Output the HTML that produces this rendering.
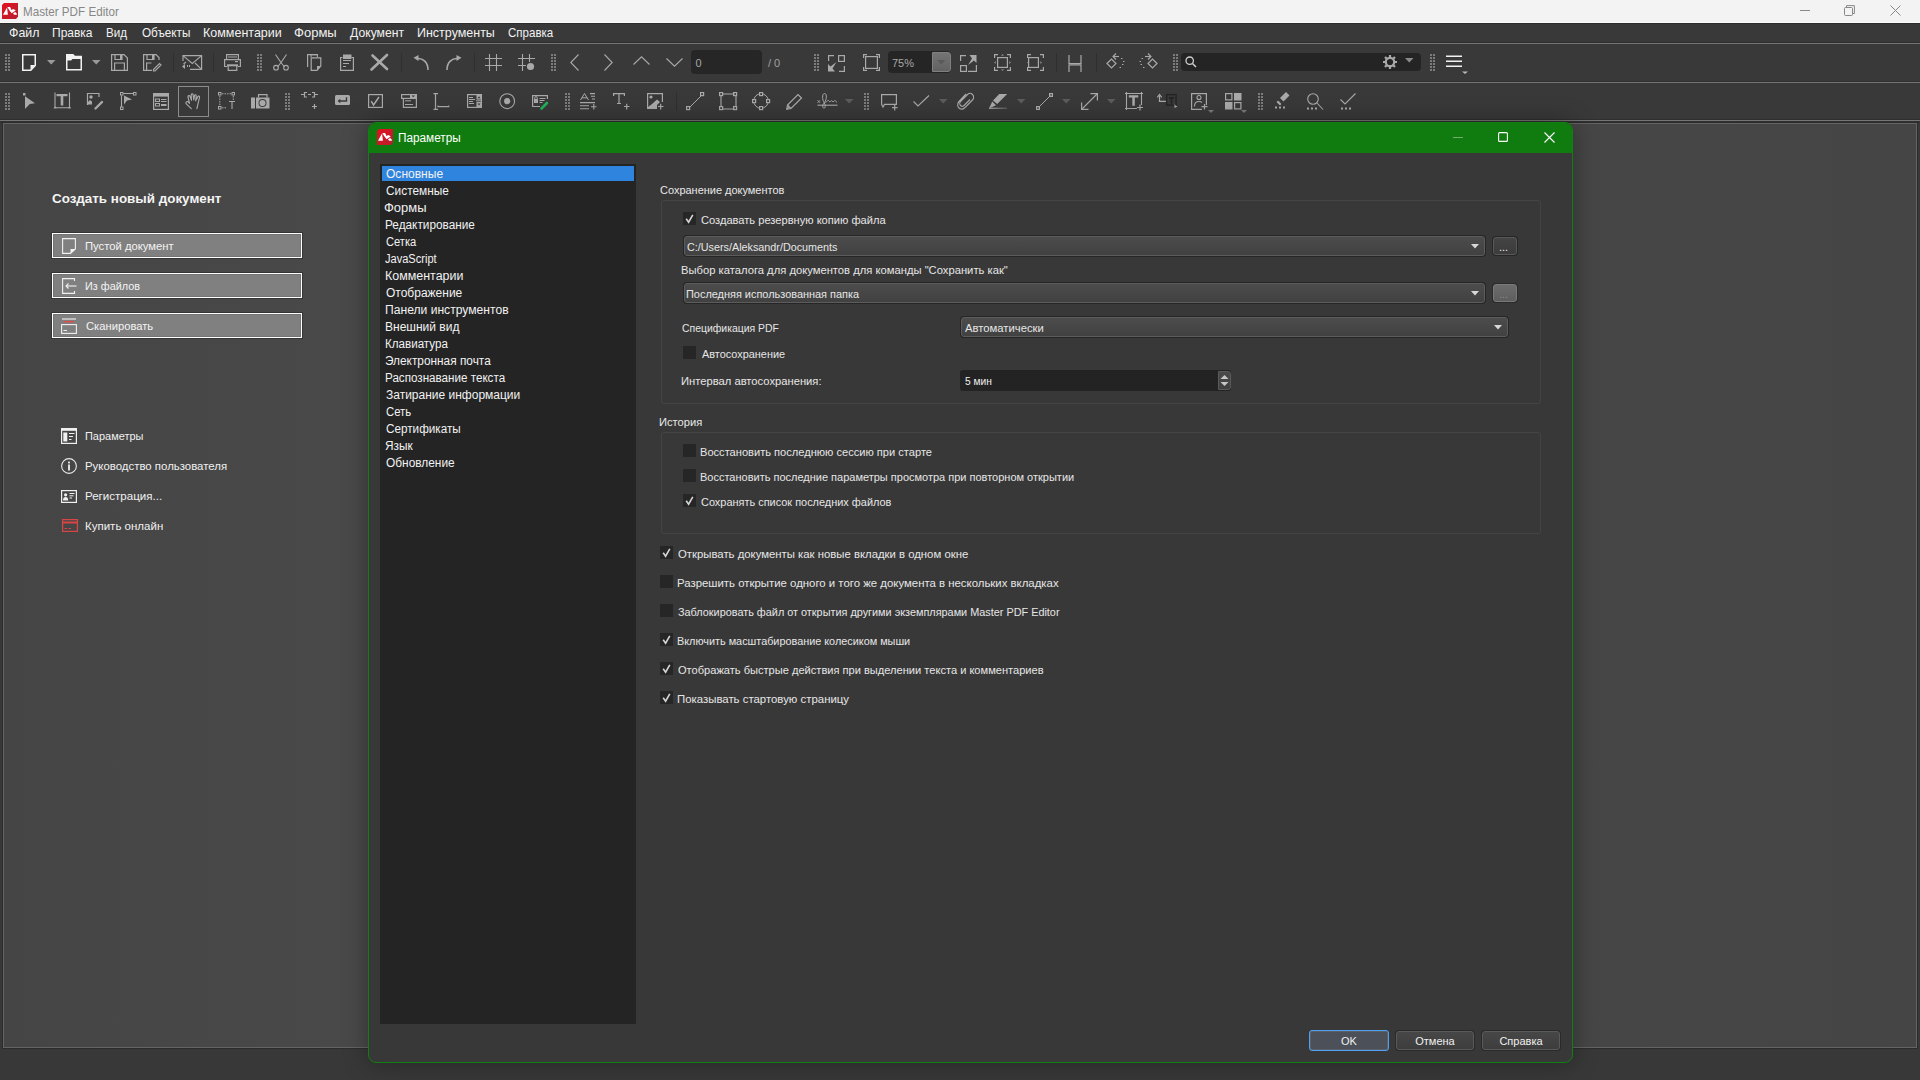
<!DOCTYPE html><html><head><meta charset="utf-8"><style>
*{margin:0;padding:0;box-sizing:border-box}
html,body{width:1920px;height:1080px;overflow:hidden;background:#383838;font-family:"Liberation Sans",sans-serif}
.t{position:absolute;line-height:1;white-space:pre}
.r{position:absolute}
svg{position:absolute;overflow:visible}
</style></head><body>

<div class="r" style="left:0px;top:0px;width:1920px;height:23px;background:#f3f3f3"></div>
<div class="r" style="left:0px;top:22px;width:1920px;height:1px;background:#fbfbfb"></div>
<div class="t" style="left:22.64px;top:6.47px;font-size:12.2px;color:#878787;font-weight:400;transform:scaleX(0.9561);transform-origin:0 0;">Master PDF Editor</div>
<svg style="left:2px;top:3px" width="16" height="16" viewBox="0 0 16 16" ><defs><linearGradient id="lg2" x1="0" y1="0" x2="1" y2="1"><stop offset="0" stop-color="#e4101f"/><stop offset="1" stop-color="#b52030"/></linearGradient></defs><path d="M2 0H16V13.8L14 16H0V2Z" fill="url(#lg2)"/><path d="M1 11.8L4.4 5.4L5.1 4.8L5.9 11.8Z M5.3 4H8.1L9.3 6.6L10 9.6L9.6 10.2L7.3 7.2Z M9.1 7.6L11 6.1L12.8 6.7L13.8 7.6L9.9 9.9L9.3 9.5Z M11 10.2L13.2 8.9L14.7 10.6L15 11.8L12.1 11.8Z" fill="#fff"/></svg>
<div class="r" style="left:1800px;top:10px;width:10px;height:1px;background:#8a8a8a"></div>
<svg style="left:1844px;top:5px" width="11" height="11" viewBox="0 0 11 11" ><path d="M2.5 2V0.6H10.4V8.5H9" fill="none" stroke="#888" stroke-width="1"/><rect x="0.5" y="2.5" width="8" height="8" rx="1" fill="none" stroke="#888" stroke-width="1"/></svg>
<svg style="left:1890px;top:5px" width="11" height="11" viewBox="0 0 11 11" ><path d="M0.5 0.5L10.5 10.5M10.5 0.5L0.5 10.5" stroke="#888" stroke-width="1"/></svg>
<div class="r" style="left:0px;top:23px;width:1920px;height:1px;background:#2c2c2c"></div>
<div class="r" style="left:0px;top:24px;width:1920px;height:18px;background:#393939"></div>
<div class="r" style="left:0px;top:42px;width:1920px;height:1px;background:#2f2f2f"></div>
<div class="r" style="left:0px;top:43px;width:1920px;height:1px;background:#747474"></div>
<div class="t" style="left:9.19px;top:26.87px;font-size:12.2px;color:#f2f2f2;font-weight:400;transform:scaleX(1.0143);transform-origin:0 0;">Файл</div>
<div class="t" style="left:52.22px;top:26.87px;font-size:12.2px;color:#f2f2f2;font-weight:400;transform:scaleX(0.9850);transform-origin:0 0;">Правка</div>
<div class="t" style="left:106.05px;top:26.87px;font-size:12.2px;color:#f2f2f2;font-weight:400;transform:scaleX(0.9524);transform-origin:0 0;">Вид</div>
<div class="t" style="left:141.50px;top:26.87px;font-size:12.2px;color:#f2f2f2;font-weight:400;transform:scaleX(0.9620);transform-origin:0 0;">Объекты</div>
<div class="t" style="left:202.97px;top:26.87px;font-size:12.2px;color:#f2f2f2;font-weight:400;transform:scaleX(1.0267);transform-origin:0 0;">Комментарии</div>
<div class="t" style="left:294.23px;top:26.87px;font-size:12.2px;color:#f2f2f2;font-weight:400;transform:scaleX(1.0684);transform-origin:0 0;">Формы</div>
<div class="t" style="left:350.00px;top:26.87px;font-size:12.2px;color:#f2f2f2;font-weight:400;transform:scaleX(1.0000);transform-origin:0 0;">Документ</div>
<div class="t" style="left:416.78px;top:26.87px;font-size:12.2px;color:#f2f2f2;font-weight:400;transform:scaleX(1.0243);transform-origin:0 0;">Инструменты</div>
<div class="t" style="left:508.00px;top:26.87px;font-size:12.2px;color:#f2f2f2;font-weight:400;transform:scaleX(0.9458);transform-origin:0 0;">Справка</div>
<div class="r" style="left:0px;top:44px;width:1920px;height:37px;background:#393939"></div>
<div class="r" style="left:0px;top:81px;width:1920px;height:1px;background:#2f2f2f"></div>
<div class="r" style="left:0px;top:82px;width:1920px;height:1px;background:#747474"></div>
<div class="r" style="left:0px;top:83px;width:1920px;height:36px;background:#393939"></div>
<div class="r" style="left:0px;top:119px;width:1920px;height:1px;background:#2f2f2f"></div>
<div class="r" style="left:0px;top:120px;width:1920px;height:1px;background:#747474"></div>
<div class="r" style="left:0px;top:121px;width:1920px;height:2px;background:#303030"></div>
<div class="r" style="left:2px;top:122px;width:1916px;height:927px;background:#2c2c2c"></div>
<div class="r" style="left:3px;top:123px;width:1914px;height:925px;background:#646464"></div>
<div class="r" style="left:4px;top:124px;width:1912px;height:923px;background:linear-gradient(90deg,#454545 0px,#494949 360px,#464646 1570px,#454545 1912px)"></div>
<svg style="left:5px;top:54px" width="5" height="17" viewBox="0 0 5 17" ><rect x="0" y="0" width="2" height="2" fill="#7c7c7c"/><rect x="3" y="0" width="2" height="2" fill="#7c7c7c"/><rect x="0" y="3" width="2" height="2" fill="#7c7c7c"/><rect x="3" y="3" width="2" height="2" fill="#7c7c7c"/><rect x="0" y="6" width="2" height="2" fill="#7c7c7c"/><rect x="3" y="6" width="2" height="2" fill="#7c7c7c"/><rect x="0" y="9" width="2" height="2" fill="#7c7c7c"/><rect x="3" y="9" width="2" height="2" fill="#7c7c7c"/><rect x="0" y="12" width="2" height="2" fill="#7c7c7c"/><rect x="3" y="12" width="2" height="2" fill="#7c7c7c"/><rect x="0" y="15" width="2" height="2" fill="#7c7c7c"/><rect x="3" y="15" width="2" height="2" fill="#7c7c7c"/></svg>
<svg style="left:22px;top:54px" width="15" height="17" viewBox="0 0 15 17" ><path d="M0.75 0.75H13.25V11.5L8.75 16.25H0.75Z" fill="none" stroke="#f2f2f2" stroke-width="1.5"/><path d="M8.5 11H13.25L8.5 16Z" fill="#f2f2f2"/></svg>
<svg style="left:47px;top:60px" width="9" height="5" viewBox="0 0 9 5" ><path d="M0 0H8.5L4.25 4.5Z" fill="#9a9a9a"/></svg>
<svg style="left:66px;top:54px" width="17" height="17" viewBox="0 0 17 17" ><path d="M0.75 15.75V0.75H7L8.5 2.5H15.25V15.75Z" fill="none" stroke="#f2f2f2" stroke-width="1.5"/><path d="M0.75 0.75H7L8.5 2.5H15.25V5H6.5L5 6.5H0.75Z" fill="#f2f2f2"/></svg>
<svg style="left:92px;top:60px" width="9" height="5" viewBox="0 0 9 5" ><path d="M0 0H8.5L4.25 4.5Z" fill="#9a9a9a"/></svg>
<svg style="left:111px;top:54px" width="17" height="17" viewBox="0 0 17 17" ><path d="M0.6 0.6H13L16.4 4V16.4H0.6Z" fill="none" stroke="#a9a9a9" stroke-width="1.2"/><path d="M4 0.6V5.5H11V0.6" fill="none" stroke="#a9a9a9" stroke-width="1.2"/><rect x="9" y="1" width="2" height="4" fill="#a9a9a9"/><path d="M3.6 16.4V9H13.4V16.4" fill="none" stroke="#a9a9a9" stroke-width="1.2"/></svg>
<svg style="left:143px;top:54px" width="19" height="17" viewBox="0 0 19 17" ><path d="M9 16.4H0.6V0.6H13L16 3.6V6" fill="none" stroke="#a9a9a9" stroke-width="1.2"/><path d="M4 0.6V5.5H11V0.6" fill="none" stroke="#a9a9a9" stroke-width="1.2"/><rect x="9" y="1" width="2" height="4" fill="#a9a9a9"/><path d="M3.6 16.4V9H8.5" fill="none" stroke="#a9a9a9" stroke-width="1.2"/><path d="M10.5 15.5L16.5 9.5L18 11L12 17H10.5Z" fill="none" stroke="#a9a9a9" stroke-width="1.2"/></svg>
<div class="r" style="left:173px;top:53px;width:1px;height:19px;background:#2f2f2f"></div>
<svg style="left:182px;top:55px" width="21" height="15" viewBox="0 0 21 15" ><path d="M1 6V0.6H19.6V14.4H8" fill="none" stroke="#a9a9a9" stroke-width="1.2"/><path d="M1 0.6L10.3 8.5L19.6 0.6M19.6 14.4L13 8M1.5 9L4 7" fill="none" stroke="#a9a9a9" stroke-width="1.1"/><path d="M0 11.5L3 9V14Z" fill="#a9a9a9"/><rect x="5" y="10" width="1" height="2" fill="#a9a9a9"/><rect x="7" y="10" width="1" height="2" fill="#a9a9a9"/></svg>
<div class="r" style="left:213px;top:53px;width:1px;height:19px;background:#2f2f2f"></div>
<svg style="left:224px;top:54px" width="17" height="17" viewBox="0 0 17 17" ><path d="M2.6 5V0.6H14.4V5" fill="none" stroke="#a9a9a9" stroke-width="1.2"/><rect x="4" y="2.5" width="9" height="1" fill="#a9a9a9"/><path d="M3 12.5H0.6V5.6H16.4V12.5H14" fill="none" stroke="#a9a9a9" stroke-width="1.2"/><rect x="11" y="7" width="3" height="1.2" fill="#a9a9a9"/><path d="M4.2 11.5V16.4H12.8V11.5" fill="none" stroke="#a9a9a9" stroke-width="1.2"/><rect x="3" y="10.3" width="11" height="2" fill="#a9a9a9"/></svg>
<svg style="left:257px;top:54px" width="5" height="17" viewBox="0 0 5 17" ><rect x="0" y="0" width="2" height="2" fill="#7c7c7c"/><rect x="3" y="0" width="2" height="2" fill="#7c7c7c"/><rect x="0" y="3" width="2" height="2" fill="#7c7c7c"/><rect x="3" y="3" width="2" height="2" fill="#7c7c7c"/><rect x="0" y="6" width="2" height="2" fill="#7c7c7c"/><rect x="3" y="6" width="2" height="2" fill="#7c7c7c"/><rect x="0" y="9" width="2" height="2" fill="#7c7c7c"/><rect x="3" y="9" width="2" height="2" fill="#7c7c7c"/><rect x="0" y="12" width="2" height="2" fill="#7c7c7c"/><rect x="3" y="12" width="2" height="2" fill="#7c7c7c"/><rect x="0" y="15" width="2" height="2" fill="#7c7c7c"/><rect x="3" y="15" width="2" height="2" fill="#7c7c7c"/></svg>
<svg style="left:273px;top:54px" width="16" height="17" viewBox="0 0 16 17" ><path d="M2.5 0.5L8 8.5L13.5 0.5M8 8.5L4.5 13M8 8.5L11.5 13" fill="none" stroke="#a9a9a9" stroke-width="1.1"/><circle cx="3" cy="13.7" r="2.3" fill="none" stroke="#a9a9a9" stroke-width="1.1"/><circle cx="13" cy="13.7" r="2.3" fill="none" stroke="#a9a9a9" stroke-width="1.1"/></svg>
<svg style="left:307px;top:54px" width="15" height="17" viewBox="0 0 15 17" ><path d="M4 3V0.6H10.4V3" fill="none" stroke="#a9a9a9" stroke-width="1.1"/><path d="M0.6 13V0.6H11M4.2 16.4V3.8H13.8V12L10 16.4Z" fill="none" stroke="#a9a9a9" stroke-width="1.2"/><path d="M10 12H13.8L10 16.4Z" fill="#a9a9a9"/></svg>
<svg style="left:340px;top:54px" width="15" height="17" viewBox="0 0 15 17" ><path d="M2.5 3.5H0.6V16.4H13.4V3.5H11.5" fill="none" stroke="#a9a9a9" stroke-width="1.2"/><rect x="3" y="0.5" width="8.5" height="4.5" fill="#a9a9a9"/><rect x="3" y="6" width="8" height="1" fill="#a9a9a9"/><rect x="3" y="9" width="6" height="1" fill="#a9a9a9"/><rect x="3" y="12" width="3" height="1" fill="#a9a9a9"/></svg>
<svg style="left:370px;top:54px" width="20" height="17" viewBox="0 0 20 17" ><path d="M2.5 1.5L17 15" stroke="#a9a9a9" stroke-width="2.6" stroke-linecap="round"/><path d="M17 1L1.5 15.5" stroke="#a9a9a9" stroke-width="2.6" stroke-linecap="round"/></svg>
<div class="r" style="left:401px;top:53px;width:1px;height:19px;background:#2f2f2f"></div>
<svg style="left:413px;top:55px" width="16" height="16" viewBox="0 0 16 16" ><path d="M4 3.5C10 3 15 7 15 15" fill="none" stroke="#a9a9a9" stroke-width="1.6"/><path d="M0.5 2.8L5.5 0V6Z" fill="#a9a9a9"/></svg>
<svg style="left:446px;top:55px" width="16" height="16" viewBox="0 0 16 16" ><path d="M12 3.5C6 3 1 7 1 15" fill="none" stroke="#a9a9a9" stroke-width="1.6"/><path d="M15.5 2.8L10.5 0V6Z" fill="#a9a9a9"/></svg>
<div class="r" style="left:474px;top:53px;width:1px;height:19px;background:#2f2f2f"></div>
<svg style="left:485px;top:54px" width="17" height="17" viewBox="0 0 17 17" ><path d="M4.5 0V17M11.5 0V17M0 4.5H17M0 11.5H17" stroke="#a9a9a9" stroke-width="1.1"/></svg>
<svg style="left:518px;top:54px" width="17" height="17" viewBox="0 0 17 17" ><path d="M4.5 0V17M11.5 0V8M0 4.5H17M0 11.5H8" stroke="#a9a9a9" stroke-width="1.1"/><circle cx="12.5" cy="12.5" r="3.6" fill="#a9a9a9"/></svg>
<svg style="left:551px;top:54px" width="5" height="17" viewBox="0 0 5 17" ><rect x="0" y="0" width="2" height="2" fill="#7c7c7c"/><rect x="3" y="0" width="2" height="2" fill="#7c7c7c"/><rect x="0" y="3" width="2" height="2" fill="#7c7c7c"/><rect x="3" y="3" width="2" height="2" fill="#7c7c7c"/><rect x="0" y="6" width="2" height="2" fill="#7c7c7c"/><rect x="3" y="6" width="2" height="2" fill="#7c7c7c"/><rect x="0" y="9" width="2" height="2" fill="#7c7c7c"/><rect x="3" y="9" width="2" height="2" fill="#7c7c7c"/><rect x="0" y="12" width="2" height="2" fill="#7c7c7c"/><rect x="3" y="12" width="2" height="2" fill="#7c7c7c"/><rect x="0" y="15" width="2" height="2" fill="#7c7c7c"/><rect x="3" y="15" width="2" height="2" fill="#7c7c7c"/></svg>
<svg style="left:570px;top:54px" width="9" height="17" viewBox="0 0 9 17" ><path d="M8.5 0.5L0.8 8.5L8.5 16.5" fill="none" stroke="#a9a9a9" stroke-width="1.1"/></svg>
<svg style="left:604px;top:54px" width="9" height="17" viewBox="0 0 9 17" ><path d="M0.5 0.5L8.2 8.5L0.5 16.5" fill="none" stroke="#a9a9a9" stroke-width="1.1"/></svg>
<svg style="left:633px;top:56px" width="17" height="10" viewBox="0 0 17 10" ><path d="M0.5 8.5L8.5 0.8L16.5 8.5" fill="none" stroke="#a9a9a9" stroke-width="1.1"/></svg>
<svg style="left:666px;top:58px" width="17" height="10" viewBox="0 0 17 10" ><path d="M0.5 0.5L8.5 8.2L16.5 0.5" fill="none" stroke="#a9a9a9" stroke-width="1.1"/></svg>
<div class="r" style="left:691px;top:50px;width:71px;height:24px;background:#262626;border-radius:4px"></div>
<div class="t" style="left:695.5px;top:57.6px;font-size:11px;color:#a8a8a8">0</div>
<div class="t" style="left:768px;top:57.6px;font-size:11px;color:#a0a0a0">/ 0</div>
<svg style="left:814px;top:54px" width="5" height="17" viewBox="0 0 5 17" ><rect x="0" y="0" width="2" height="2" fill="#7c7c7c"/><rect x="3" y="0" width="2" height="2" fill="#7c7c7c"/><rect x="0" y="3" width="2" height="2" fill="#7c7c7c"/><rect x="3" y="3" width="2" height="2" fill="#7c7c7c"/><rect x="0" y="6" width="2" height="2" fill="#7c7c7c"/><rect x="3" y="6" width="2" height="2" fill="#7c7c7c"/><rect x="0" y="9" width="2" height="2" fill="#7c7c7c"/><rect x="3" y="9" width="2" height="2" fill="#7c7c7c"/><rect x="0" y="12" width="2" height="2" fill="#7c7c7c"/><rect x="3" y="12" width="2" height="2" fill="#7c7c7c"/><rect x="0" y="15" width="2" height="2" fill="#7c7c7c"/><rect x="3" y="15" width="2" height="2" fill="#7c7c7c"/></svg>
<svg style="left:828px;top:55px" width="18" height="17" viewBox="0 0 18 17" ><path d="M0.6 6V0.6H6M11 16.4H16.4V11" fill="none" stroke="#a9a9a9" stroke-width="1.2"/><rect x="10.6" y="0.6" width="5.8" height="5.8" fill="none" stroke="#a9a9a9" stroke-width="1.2"/><path d="M0 16.5V9L2.5 11.5L8.5 7L4.5 13.5L7 16.5Z" fill="#a9a9a9"/></svg>
<svg style="left:863px;top:54px" width="17" height="17" viewBox="0 0 17 17" ><path d="M0.6 4V0.6H4M13 0.6H16.4V4M16.4 13V16.4H13M4 16.4H0.6V13" fill="none" stroke="#a9a9a9" stroke-width="1.2"/><rect x="2.6" y="2.6" width="11.8" height="11.8" fill="none" stroke="#a9a9a9" stroke-width="1.2"/></svg>
<div class="r" style="left:888px;top:51px;width:63px;height:22px;background:#252525;border-radius:4px"></div>
<div class="r" style="left:932px;top:52px;width:19px;height:20px;background:linear-gradient(#747474,#626262);border:1px solid #808080;border-radius:0 3px 3px 0"></div>
<svg style="left:937px;top:60px" width="9" height="5" viewBox="0 0 9 5" ><path d="M0 0H8.5L4.25 4.5Z" fill="#5a5a5a"/></svg>
<div class="t" style="left:892px;top:57.6px;font-size:11px;color:#a8a8a8">75%</div>
<svg style="left:960px;top:55px" width="17" height="17" viewBox="0 0 17 17" ><path d="M0.6 6V0.6H6M8 16.4H16.4V10" fill="none" stroke="#a9a9a9" stroke-width="1.2"/><rect x="0.6" y="10.6" width="5.8" height="5.8" fill="none" stroke="#a9a9a9" stroke-width="1.2"/><path d="M16.5 0V8L14 5.5L8 10L12 3.5L9.5 0Z" fill="#a9a9a9"/></svg>
<svg style="left:994px;top:54px" width="17" height="17" viewBox="0 0 17 17" ><path d="M0.6 4V0.6H4M13 0.6H16.4V4M16.4 13V16.4H13M4 16.4H0.6V13" fill="none" stroke="#a9a9a9" stroke-width="1.2"/><rect x="3.6" y="3.6" width="9.8" height="9.8" fill="none" stroke="#a9a9a9" stroke-width="1.2"/><path d="M7 1.5H10L8.5 0.3Z M7 15.5H10L8.5 16.7Z M1.5 7V10L0.3 8.5Z M15.5 7V10L16.7 8.5Z" fill="#a9a9a9"/></svg>
<svg style="left:1027px;top:54px" width="17" height="17" viewBox="0 0 17 17" ><path d="M0.6 4V0.6H4M13 0.6H16.4V4M16.4 13V16.4H13M4 16.4H0.6V13" fill="none" stroke="#a9a9a9" stroke-width="1.2"/><rect x="1.6" y="3.6" width="9.8" height="9.8" fill="none" stroke="#a9a9a9" stroke-width="1.2"/><path d="M1.5 7V10L0.3 8.5Z M13.5 7V10L14.7 8.5Z" fill="#a9a9a9"/></svg>
<div class="r" style="left:1056px;top:53px;width:1px;height:19px;background:#2f2f2f"></div>
<svg style="left:1068px;top:55px" width="14" height="17" viewBox="0 0 14 17" ><path d="M1 0V8.5H13V0M1 17V9.8H13V17" fill="none" stroke="#a9a9a9" stroke-width="1.2"/></svg>
<div class="r" style="left:1096px;top:53px;width:1px;height:19px;background:#2f2f2f"></div>
<svg style="left:1106px;top:53px" width="20" height="17" viewBox="0 0 20 17" ><path d="M1 10.5L5.5 6L10 10.5L5.5 15Z" fill="none" stroke="#a9a9a9" stroke-width="1.2"/><path d="M7.5 3.5H13" stroke="#a9a9a9" stroke-width="1.1"/><path d="M10 0.5L7 3.5L10 6.5" fill="none" stroke="#a9a9a9" stroke-width="1.1"/><path d="M15 5.5h1.5M17 8.5h1.5M16 11.5h1.5M13.5 14.5h1.5" stroke="#a9a9a9" stroke-width="1"/></svg>
<svg style="left:1138px;top:53px" width="20" height="17" viewBox="0 0 20 17" ><path d="M19 10.5L14.5 6L10 10.5L14.5 15Z" fill="none" stroke="#a9a9a9" stroke-width="1.2"/><path d="M7 3.5H12.5" stroke="#a9a9a9" stroke-width="1.1"/><path d="M10 0.5L13 3.5L10 6.5" fill="none" stroke="#a9a9a9" stroke-width="1.1"/><path d="M3.5 5.5h1.5M1.5 8.5h1.5M2.5 11.5h1.5M5 14.5h1.5" stroke="#a9a9a9" stroke-width="1"/></svg>
<svg style="left:1173px;top:54px" width="5" height="17" viewBox="0 0 5 17" ><rect x="0" y="0" width="2" height="2" fill="#7c7c7c"/><rect x="3" y="0" width="2" height="2" fill="#7c7c7c"/><rect x="0" y="3" width="2" height="2" fill="#7c7c7c"/><rect x="3" y="3" width="2" height="2" fill="#7c7c7c"/><rect x="0" y="6" width="2" height="2" fill="#7c7c7c"/><rect x="3" y="6" width="2" height="2" fill="#7c7c7c"/><rect x="0" y="9" width="2" height="2" fill="#7c7c7c"/><rect x="3" y="9" width="2" height="2" fill="#7c7c7c"/><rect x="0" y="12" width="2" height="2" fill="#7c7c7c"/><rect x="3" y="12" width="2" height="2" fill="#7c7c7c"/><rect x="0" y="15" width="2" height="2" fill="#7c7c7c"/><rect x="3" y="15" width="2" height="2" fill="#7c7c7c"/></svg>
<div class="r" style="left:1181px;top:53px;width:240px;height:18px;background:#242424;border-radius:4px"></div>
<svg style="left:1185px;top:56px" width="12" height="12" viewBox="0 0 12 12" ><circle cx="4.7" cy="4.7" r="3.7" fill="none" stroke="#cfcfcf" stroke-width="1.3"/><path d="M7.5 7.5L11 11" stroke="#cfcfcf" stroke-width="1.5"/></svg>
<svg style="left:1383px;top:55px" width="14" height="14" viewBox="0 0 14 14" ><circle cx="7" cy="7" r="4.2" fill="none" stroke="#a9a9a9" stroke-width="2.2"/><path d="M7 0V14M0 7H14M2 2L12 12M12 2L2 12" stroke="#a9a9a9" stroke-width="2.2" stroke-dasharray="2.6 8.8 2.6 0"/></svg>
<svg style="left:1405px;top:58px" width="9" height="5" viewBox="0 0 9 5" ><path d="M0 0H8.5L4.25 4.5Z" fill="#8a8a8a"/></svg>
<svg style="left:1430px;top:54px" width="5" height="17" viewBox="0 0 5 17" ><rect x="0" y="0" width="2" height="2" fill="#7c7c7c"/><rect x="3" y="0" width="2" height="2" fill="#7c7c7c"/><rect x="0" y="3" width="2" height="2" fill="#7c7c7c"/><rect x="3" y="3" width="2" height="2" fill="#7c7c7c"/><rect x="0" y="6" width="2" height="2" fill="#7c7c7c"/><rect x="3" y="6" width="2" height="2" fill="#7c7c7c"/><rect x="0" y="9" width="2" height="2" fill="#7c7c7c"/><rect x="3" y="9" width="2" height="2" fill="#7c7c7c"/><rect x="0" y="12" width="2" height="2" fill="#7c7c7c"/><rect x="3" y="12" width="2" height="2" fill="#7c7c7c"/><rect x="0" y="15" width="2" height="2" fill="#7c7c7c"/><rect x="3" y="15" width="2" height="2" fill="#7c7c7c"/></svg>
<svg style="left:1446px;top:55px" width="22" height="20" viewBox="0 0 22 20" ><path d="M0 1.3H16M0 6.3H16M0 11.3H16" stroke="#f2f2f2" stroke-width="1.6"/><path d="M16 16.5H22L19 19Z" fill="#bbbbbb"/></svg>
<svg style="left:5px;top:93px" width="5" height="17" viewBox="0 0 5 17" ><rect x="0" y="0" width="2" height="2" fill="#7c7c7c"/><rect x="3" y="0" width="2" height="2" fill="#7c7c7c"/><rect x="0" y="3" width="2" height="2" fill="#7c7c7c"/><rect x="3" y="3" width="2" height="2" fill="#7c7c7c"/><rect x="0" y="6" width="2" height="2" fill="#7c7c7c"/><rect x="3" y="6" width="2" height="2" fill="#7c7c7c"/><rect x="0" y="9" width="2" height="2" fill="#7c7c7c"/><rect x="3" y="9" width="2" height="2" fill="#7c7c7c"/><rect x="0" y="12" width="2" height="2" fill="#7c7c7c"/><rect x="3" y="12" width="2" height="2" fill="#7c7c7c"/><rect x="0" y="15" width="2" height="2" fill="#7c7c7c"/><rect x="3" y="15" width="2" height="2" fill="#7c7c7c"/></svg>
<svg style="left:23px;top:92px" width="13" height="18" viewBox="0 0 13 18" ><rect x="0" y="1" width="2.5" height="2.5" fill="#a9a9a9"/><path d="M2 4.2L12 11.3L6.8 12L2 17Z" fill="#a9a9a9"/></svg>
<svg style="left:54px;top:92px" width="17" height="18" viewBox="0 0 17 18" ><path d="M1 0.5V16.5M15.5 0.5V16.5M0 15.8H16.5" stroke="#a9a9a9" stroke-width="1.1"/><path d="M2.5 2H13.5V4.2H9.3V13.5H6.7V4.2H2.5Z" fill="#a9a9a9"/><path d="M0 16.3L1 14.8L2 16.3M14.5 16.3L15.5 14.8L16.5 16.3" fill="none" stroke="#a9a9a9" stroke-width="1"/></svg>
<svg style="left:87px;top:93px" width="17" height="17" viewBox="0 0 17 17" ><path d="M0.5 12V0.5H12V4" fill="none" stroke="#a9a9a9" stroke-width="1.2"/><circle cx="4" cy="4" r="1.7" fill="#a9a9a9"/><path d="M1 11.5V9L3 7L5 8.5V11.5Z" fill="#a9a9a9"/><path d="M8.5 15.5L15 9" stroke="#a9a9a9" stroke-width="2.4" stroke-linecap="round"/></svg>
<svg style="left:120px;top:92px" width="17" height="18" viewBox="0 0 17 18" ><path d="M1.5 3.5V15M3.5 1.5H14" stroke="#a9a9a9" stroke-width="1.1"/><rect x="0.5" y="0.5" width="2.5" height="2.5" fill="none" stroke="#a9a9a9" stroke-width="1"/><rect x="13.5" y="0.5" width="2.5" height="2.5" fill="none" stroke="#a9a9a9" stroke-width="1"/><rect x="0.5" y="15" width="2.5" height="2.5" fill="none" stroke="#a9a9a9" stroke-width="1"/><path d="M4 3.5L12 7.5L7 8.5L4 12.5Z" fill="#a9a9a9"/></svg>
<svg style="left:153px;top:93px" width="16" height="17" viewBox="0 0 16 17" ><rect x="0.6" y="0.6" width="14.8" height="15.8" fill="none" stroke="#a9a9a9" stroke-width="1.2"/><rect x="0.6" y="0.6" width="14.8" height="3" fill="#a9a9a9"/><rect x="2.5" y="6" width="4" height="2.5" fill="none" stroke="#a9a9a9" stroke-width="1"/><rect x="2.5" y="10.5" width="4" height="2.5" fill="none" stroke="#a9a9a9" stroke-width="1"/><rect x="8" y="6" width="5.5" height="1" fill="#a9a9a9"/><rect x="8" y="8" width="5.5" height="1" fill="#a9a9a9"/><rect x="8" y="11" width="5.5" height="2" fill="#a9a9a9"/></svg>
<div class="r" style="left:178px;top:86px;width:31px;height:31px;border:1px solid #8c8c8c"></div>
<svg style="left:185px;top:93px" width="18" height="17" viewBox="0 0 18 17" ><path d="M6.3 15.7L1.3 10.8C0.3 9.8 1.5 8 2.8 8.7L4.5 10.3L3 4C2.7 2.5 4.4 2 5 3.3L6.5 7.3L6.2 2C6.2 0.6 7.8 0.5 8.1 1.7L8.8 7L9.5 2.6C9.7 1.3 11.3 1.5 11.2 2.9L10.7 7.8L12.8 3.6C13.4 2.5 14.8 3.1 14.5 4.3L11.9 15.7" fill="none" stroke="#a9a9a9" stroke-width="1.15" stroke-linecap="round" stroke-linejoin="round"/></svg>
<svg style="left:218px;top:92px" width="18" height="18" viewBox="0 0 18 18" ><rect x="0.5" y="0.5" width="2.5" height="2.5" fill="none" stroke="#a9a9a9" stroke-width="1"/><rect x="14" y="0.5" width="2.5" height="2.5" fill="none" stroke="#a9a9a9" stroke-width="1"/><rect x="0.5" y="14.5" width="2.5" height="2.5" fill="none" stroke="#a9a9a9" stroke-width="1"/><path d="M4 1.8H13M1.8 4V13.5M15.3 4V9M4 15.8H9" stroke="#a9a9a9" stroke-width="1" stroke-dasharray="1.5 1"/><path d="M11 9.5H17M14 9.5V17" stroke="#a9a9a9" stroke-width="1.1"/></svg>
<svg style="left:251px;top:94px" width="19" height="15" viewBox="0 0 19 15" ><path d="M7.5 3.5V0.6H16V3.5" fill="none" stroke="#a9a9a9" stroke-width="1.2"/><rect x="0" y="3.5" width="4" height="11" fill="#a9a9a9"/><path d="M5 3.5H18.5V14.5H5Z" fill="#a9a9a9"/><circle cx="11.5" cy="9" r="4" fill="#383838"/><circle cx="11.5" cy="9" r="3.1" fill="#a9a9a9"/></svg>
<svg style="left:285px;top:93px" width="5" height="17" viewBox="0 0 5 17" ><rect x="0" y="0" width="2" height="2" fill="#7c7c7c"/><rect x="3" y="0" width="2" height="2" fill="#7c7c7c"/><rect x="0" y="3" width="2" height="2" fill="#7c7c7c"/><rect x="3" y="3" width="2" height="2" fill="#7c7c7c"/><rect x="0" y="6" width="2" height="2" fill="#7c7c7c"/><rect x="3" y="6" width="2" height="2" fill="#7c7c7c"/><rect x="0" y="9" width="2" height="2" fill="#7c7c7c"/><rect x="3" y="9" width="2" height="2" fill="#7c7c7c"/><rect x="0" y="12" width="2" height="2" fill="#7c7c7c"/><rect x="3" y="12" width="2" height="2" fill="#7c7c7c"/><rect x="0" y="15" width="2" height="2" fill="#7c7c7c"/><rect x="3" y="15" width="2" height="2" fill="#7c7c7c"/></svg>
<svg style="left:301px;top:92px" width="17" height="18" viewBox="0 0 17 18" ><path d="M0 2.5H3M14 2.5H17M7 2.5H10" stroke="#a9a9a9" stroke-width="1.1"/><path d="M6 0.5H3.5V5H6M11 0.5H13.5V5H11" fill="none" stroke="#a9a9a9" stroke-width="1.2"/><path d="M11 14.5H16M13.5 12V17" stroke="#a9a9a9" stroke-width="1.2"/></svg>
<svg style="left:335px;top:95px" width="15" height="10" viewBox="0 0 15 10" ><rect x="0" y="0" width="15" height="10" rx="1.5" fill="#a9a9a9"/><path d="M11.5 2.3V6H4" fill="none" stroke="#383838" stroke-width="1.4"/><path d="M2.5 6L5.3 3.8V8.2Z" fill="#383838"/></svg>
<svg style="left:368px;top:94px" width="15" height="14" viewBox="0 0 15 14" ><rect x="0.6" y="0.6" width="13.8" height="12.8" fill="none" stroke="#a9a9a9" stroke-width="1.2"/><path d="M3.2 7.2L5.5 11L11 3" fill="none" stroke="#a9a9a9" stroke-width="1.5"/></svg>
<svg style="left:401px;top:94px" width="16" height="14" viewBox="0 0 16 14" ><rect x="0.6" y="0.6" width="14.8" height="3.8" fill="none" stroke="#a9a9a9" stroke-width="1.2"/><rect x="9" y="0.6" width="6.4" height="3.8" fill="#a9a9a9"/><path d="M10.5 1.5H14L12.25 3.3Z" fill="#383838"/><path d="M2.4 4.4V13.4H15.4V4.4" fill="none" stroke="#a9a9a9" stroke-width="1.2"/><rect x="4" y="6.3" width="6" height="1" fill="#a9a9a9"/><rect x="4" y="10" width="8" height="1" fill="#a9a9a9"/></svg>
<svg style="left:433px;top:93px" width="17" height="17" viewBox="0 0 17 17" ><path d="M2.5 0.5V16.5M0.5 0.6H5M0.5 16.4H5" stroke="#a9a9a9" stroke-width="1.2"/><path d="M5 12.5V13.7H15.7V12.5" fill="none" stroke="#a9a9a9" stroke-width="1.2"/></svg>
<svg style="left:467px;top:94px" width="15" height="14" viewBox="0 0 15 14" ><rect x="0.6" y="0.6" width="13.8" height="12.8" fill="none" stroke="#a9a9a9" stroke-width="1.2"/><rect x="9.5" y="0.6" width="4.9" height="5" fill="#a9a9a9"/><rect x="9.5" y="8" width="4.9" height="5.4" fill="#a9a9a9"/><path d="M10.5 4.3H13.5L12 2.3Z M10.5 9.5H13.5L12 11.5Z" fill="#383838"/><rect x="2" y="3" width="4" height="1" fill="#a9a9a9"/><rect x="2" y="5" width="6" height="1" fill="#a9a9a9"/><rect x="2" y="7" width="4" height="1" fill="#a9a9a9"/><rect x="2" y="9" width="5" height="1" fill="#a9a9a9"/><rect x="9" y="6.3" width="5.5" height="1" fill="#a9a9a9"/></svg>
<svg style="left:499px;top:93px" width="17" height="17" viewBox="0 0 17 17" ><circle cx="8.2" cy="8.2" r="7.4" fill="none" stroke="#a9a9a9" stroke-width="1.1"/><circle cx="8.2" cy="8.2" r="3.1" fill="#a9a9a9"/></svg>
<svg style="left:532px;top:95px" width="17" height="15" viewBox="0 0 17 15" ><path d="M8 11.5H0.6V0.6H15.4V4" fill="none" stroke="#a9a9a9" stroke-width="1.2"/><rect x="2" y="4" width="4" height="4" fill="#a9a9a9"/><path d="M2.8 4V2.8A1.2 1.2 0 0 1 5.2 2.8V4" fill="none" stroke="#a9a9a9" stroke-width="1"/><rect x="7.5" y="3" width="6" height="1" fill="#a9a9a9"/><rect x="7.5" y="5" width="5" height="1" fill="#a9a9a9"/><rect x="7.5" y="7" width="3" height="1" fill="#a9a9a9"/><path d="M9.5 13.5L15 8" stroke="#21b25a" stroke-width="2.6" stroke-linecap="round"/></svg>
<svg style="left:565px;top:93px" width="5" height="17" viewBox="0 0 5 17" ><rect x="0" y="0" width="2" height="2" fill="#7c7c7c"/><rect x="3" y="0" width="2" height="2" fill="#7c7c7c"/><rect x="0" y="3" width="2" height="2" fill="#7c7c7c"/><rect x="3" y="3" width="2" height="2" fill="#7c7c7c"/><rect x="0" y="6" width="2" height="2" fill="#7c7c7c"/><rect x="3" y="6" width="2" height="2" fill="#7c7c7c"/><rect x="0" y="9" width="2" height="2" fill="#7c7c7c"/><rect x="3" y="9" width="2" height="2" fill="#7c7c7c"/><rect x="0" y="12" width="2" height="2" fill="#7c7c7c"/><rect x="3" y="12" width="2" height="2" fill="#7c7c7c"/><rect x="0" y="15" width="2" height="2" fill="#7c7c7c"/><rect x="3" y="15" width="2" height="2" fill="#7c7c7c"/></svg>
<svg style="left:580px;top:93px" width="17" height="17" viewBox="0 0 17 17" ><path d="M0.5 7L4.5 0.5L8.5 7M2 4.8H7" fill="none" stroke="#a9a9a9" stroke-width="1"/><path d="M10 0.6H15M11 3.3H15M12 6H15M0 9.6H15M0 12.8H9M0 15.8H9" stroke="#a9a9a9" stroke-width="1.1"/><path d="M11 13.7H16.5M13.8 11V16.5" stroke="#a9a9a9" stroke-width="1.1"/></svg>
<svg style="left:613px;top:93px" width="17" height="17" viewBox="0 0 17 17" ><path d="M0.6 3V0.6H11.4V3M6 0.6V10.5M4 10.5H8" fill="none" stroke="#a9a9a9" stroke-width="1.2"/><path d="M11 13.5H16.5M13.7 10.8V16.5" stroke="#a9a9a9" stroke-width="1.2"/></svg>
<svg style="left:647px;top:93px" width="17" height="17" viewBox="0 0 17 17" ><path d="M0.6 16V0.6H15.4V9" fill="none" stroke="#a9a9a9" stroke-width="1.2"/><circle cx="4" cy="4" r="1.6" fill="#a9a9a9"/><path d="M1 16V14L5 11L10 6.5L13 9L10 12V16Z" fill="#a9a9a9"/><path d="M11 13.5H16.5M13.7 10.8V16.5" stroke="#a9a9a9" stroke-width="1.2"/></svg>
<div class="r" style="left:676px;top:92px;width:1px;height:19px;background:#2f2f2f"></div>
<svg style="left:686px;top:92px" width="19" height="19" viewBox="0 0 19 19" ><path d="M3.5 15.5L15.5 3.5" stroke="#a9a9a9" stroke-width="1"/><rect x="0.6" y="14.6" width="3" height="3" fill="none" stroke="#a9a9a9" stroke-width="1.2"/><rect x="14.6" y="0.6" width="3" height="3" fill="none" stroke="#a9a9a9" stroke-width="1.2"/></svg>
<svg style="left:719px;top:92px" width="19" height="19" viewBox="0 0 19 19" ><path d="M2 3.5V15M17 3.5V15M3.5 2H15.5M3.5 17H15.5" stroke="#a9a9a9" stroke-width="1.1"/><rect x="0.6" y="0.6" width="3" height="3" fill="none" stroke="#a9a9a9" stroke-width="1.2"/><rect x="14.6" y="0.6" width="3" height="3" fill="none" stroke="#a9a9a9" stroke-width="1.2"/><rect x="0.6" y="14.6" width="3" height="3" fill="none" stroke="#a9a9a9" stroke-width="1.2"/><rect x="14.6" y="14.6" width="3" height="3" fill="none" stroke="#a9a9a9" stroke-width="1.2"/></svg>
<svg style="left:752px;top:92px" width="19" height="19" viewBox="0 0 19 19" ><circle cx="9" cy="9" r="7.3" fill="none" stroke="#a9a9a9" stroke-width="1"/><rect x="7.6" y="0.6" width="3" height="3" fill="#383838" stroke="#a9a9a9" stroke-width="1.2"/><rect x="7.6" y="14.6" width="3" height="3" fill="#383838" stroke="#a9a9a9" stroke-width="1.2"/><rect x="0.6" y="7.6" width="3" height="3" fill="#383838" stroke="#a9a9a9" stroke-width="1.2"/><rect x="14.6" y="7.6" width="3" height="3" fill="#383838" stroke="#a9a9a9" stroke-width="1.2"/></svg>
<svg style="left:786px;top:93px" width="17" height="17" viewBox="0 0 17 17" ><path d="M0.8 16.2L1.5 12L12 1.5L15.5 5L5 15.5Z" fill="none" stroke="#a9a9a9" stroke-width="1.2"/><path d="M1.5 12L5 15.5M0.8 16.2L2.8 14.2" stroke="#a9a9a9" stroke-width="1.2"/></svg>
<svg style="left:817px;top:93px" width="21" height="17" viewBox="0 0 21 17" ><path d="M0.5 12.2H20.5" stroke="#a9a9a9" stroke-width="1.1"/><path d="M0.6 7.3L3 9.8M3 7.3L0.6 9.8" stroke="#a9a9a9" stroke-width="0.9"/><path d="M7.3 9.8C5.2 7 4.8 0.6 7.6 0.6C10.4 0.6 9.5 7 7.3 9.8C5 12.5 5.5 15.2 7 15.2C8.5 15.2 8.8 12 7 9.6M8.3 9.3C10 9 10.5 7 11.5 7.5C12.5 8 12.5 9.5 13.5 8.5C14.5 7.2 15 7.5 16 9C17 8 17.5 7 18.5 8L20 9.3" fill="none" stroke="#a9a9a9" stroke-width="1"/></svg>
<svg style="left:845px;top:99px" width="9" height="5" viewBox="0 0 9 5" ><path d="M0 0H8.5L4.25 4.5Z" fill="#5c5c5c"/></svg>
<svg style="left:864px;top:93px" width="5" height="17" viewBox="0 0 5 17" ><rect x="0" y="0" width="2" height="2" fill="#7c7c7c"/><rect x="3" y="0" width="2" height="2" fill="#7c7c7c"/><rect x="0" y="3" width="2" height="2" fill="#7c7c7c"/><rect x="3" y="3" width="2" height="2" fill="#7c7c7c"/><rect x="0" y="6" width="2" height="2" fill="#7c7c7c"/><rect x="3" y="6" width="2" height="2" fill="#7c7c7c"/><rect x="0" y="9" width="2" height="2" fill="#7c7c7c"/><rect x="3" y="9" width="2" height="2" fill="#7c7c7c"/><rect x="0" y="12" width="2" height="2" fill="#7c7c7c"/><rect x="3" y="12" width="2" height="2" fill="#7c7c7c"/><rect x="0" y="15" width="2" height="2" fill="#7c7c7c"/><rect x="3" y="15" width="2" height="2" fill="#7c7c7c"/></svg>
<svg style="left:881px;top:94px" width="17" height="17" viewBox="0 0 17 17" ><path d="M0.6 10.4V0.6H15.4V10.4H3.5L2 13Z" fill="none" stroke="#a9a9a9" stroke-width="1.2"/><path d="M11 13.7H16.5M13.7 11V16.5" stroke="#a9a9a9" stroke-width="1.2"/></svg>
<svg style="left:913px;top:95px" width="17" height="13" viewBox="0 0 17 13" ><path d="M0.5 6.5L5 11L16 0.5" fill="none" stroke="#a9a9a9" stroke-width="1.1"/></svg>
<svg style="left:939px;top:99px" width="9" height="5" viewBox="0 0 9 5" ><path d="M0 0H8.5L4.25 4.5Z" fill="#5c5c5c"/></svg>
<svg style="left:957px;top:93px" width="18" height="17" viewBox="0 0 18 17" ><path d="M9 1L2 8.5C0 10.5 0.5 13.5 2 15C3.5 16.5 6 16.5 8 14.5L15.5 7C17 5.5 17 3 15.5 1.5C14 0 12 0 10.5 1.5L3.5 8.5C2.5 9.5 2.5 11.5 3.5 12.5C4.5 13.5 6 13.5 7 12.5L13 6.5" fill="none" stroke="#a9a9a9" stroke-width="1.1"/></svg>
<svg style="left:989px;top:94px" width="19" height="16" viewBox="0 0 19 16" ><defs><linearGradient id="hlg"><stop offset="0" stop-color="#a0a0a0"/><stop offset="1" stop-color="#555"/></linearGradient></defs><path d="M10.3 0.1H18.2L8.2 10.1L4 6.4Z" fill="#a9a9a9"/><path d="M3.3 7.6L7 11.3L0 14.6Z" fill="#a9a9a9"/><rect x="0" y="13.6" width="18" height="1.4" fill="url(#hlg)"/></svg>
<svg style="left:1017px;top:99px" width="9" height="5" viewBox="0 0 9 5" ><path d="M0 0H8.5L4.25 4.5Z" fill="#5c5c5c"/></svg>
<svg style="left:1036px;top:93px" width="17" height="17" viewBox="0 0 17 17" ><path d="M2.5 14.5L14.5 2.5" stroke="#a9a9a9" stroke-width="1"/><rect x="0.6" y="13.6" width="2.8" height="2.8" fill="none" stroke="#a9a9a9" stroke-width="1.2"/><rect x="13.6" y="0.6" width="2.8" height="2.8" fill="none" stroke="#a9a9a9" stroke-width="1.2"/></svg>
<svg style="left:1062px;top:99px" width="9" height="5" viewBox="0 0 9 5" ><path d="M0 0H8.5L4.25 4.5Z" fill="#5c5c5c"/></svg>
<svg style="left:1081px;top:93px" width="17" height="17" viewBox="0 0 17 17" ><path d="M1 16L16 1" stroke="#a9a9a9" stroke-width="1.1"/><path d="M9.5 0.6H16.4V7.5M0.6 9.5V16.4H7.5" fill="none" stroke="#a9a9a9" stroke-width="1.2"/></svg>
<svg style="left:1107px;top:99px" width="9" height="5" viewBox="0 0 9 5" ><path d="M0 0H8.5L4.25 4.5Z" fill="#5c5c5c"/></svg>
<svg style="left:1125px;top:92px" width="19" height="19" viewBox="0 0 19 19" ><path d="M1.5 0V18M16.5 0V13M0 1.5H18M0 16.5H12" stroke="#a9a9a9" stroke-width="1.1"/><path d="M3.8 3.3H13.3V5.5H9.8V13.8H7.3V5.5H3.8Z" fill="#a9a9a9"/><path d="M12 15.5H18M15 12.5V18.5" stroke="#a9a9a9" stroke-width="1.2"/></svg>
<svg style="left:1157px;top:94px" width="21" height="14" viewBox="0 0 21 14" ><path d="M2.5 1.5V7.3H10" fill="none" stroke="#a9a9a9" stroke-width="1.2"/><path d="M0.3 3.3L2.5 0.5L4.7 3.3" fill="none" stroke="#a9a9a9" stroke-width="1.1"/><rect x="9.6" y="0.6" width="9.5" height="10.5" fill="none" stroke="#232323" stroke-width="1.3"/><path d="M12 3H17V4.8H15.3V9.5H13.7V4.8H12Z" fill="#232323"/><path d="M17.5 9.5L18.5 11.5L20.5 12.5L18.5 13.5L17.5 14Z" fill="#a9a9a9"/></svg>
<svg style="left:1191px;top:93px" width="17" height="17" viewBox="0 0 17 17" ><path d="M11 16.4H0.6V0.6H15.4V12" fill="none" stroke="#a9a9a9" stroke-width="1.2"/><circle cx="8" cy="4.5" r="2" fill="none" stroke="#a9a9a9" stroke-width="1.1"/><path d="M3.5 13.5C3.5 10 5 8.5 8 8.5C9.5 8.5 10.5 9 11 9.5" fill="none" stroke="#a9a9a9" stroke-width="1.1"/><path d="M10.5 13.7H16.5M13.5 11V16.5" stroke="#a9a9a9" stroke-width="1.2"/></svg>
<svg style="left:1208px;top:110px" width="7" height="4" viewBox="0 0 7 4" ><path d="M0 0H6L3 3Z" fill="#7a7a7a"/></svg>
<svg style="left:1225px;top:93px" width="17" height="17" viewBox="0 0 17 17" ><rect x="0.6" y="0.6" width="6.3" height="6.3" fill="none" stroke="#a9a9a9" stroke-width="1.2"/><rect x="9" y="0" width="7.5" height="7.5" fill="#a9a9a9"/><rect x="0" y="9" width="7.5" height="7.5" fill="#a9a9a9"/><rect x="9.6" y="9.6" width="6.3" height="6.3" fill="none" stroke="#a9a9a9" stroke-width="1.2"/></svg>
<svg style="left:1241px;top:110px" width="7" height="4" viewBox="0 0 7 4" ><path d="M0 0H6L3 3Z" fill="#7a7a7a"/></svg>
<svg style="left:1258px;top:93px" width="5" height="17" viewBox="0 0 5 17" ><rect x="0" y="0" width="2" height="2" fill="#7c7c7c"/><rect x="3" y="0" width="2" height="2" fill="#7c7c7c"/><rect x="0" y="3" width="2" height="2" fill="#7c7c7c"/><rect x="3" y="3" width="2" height="2" fill="#7c7c7c"/><rect x="0" y="6" width="2" height="2" fill="#7c7c7c"/><rect x="3" y="6" width="2" height="2" fill="#7c7c7c"/><rect x="0" y="9" width="2" height="2" fill="#7c7c7c"/><rect x="3" y="9" width="2" height="2" fill="#7c7c7c"/><rect x="0" y="12" width="2" height="2" fill="#7c7c7c"/><rect x="3" y="12" width="2" height="2" fill="#7c7c7c"/><rect x="0" y="15" width="2" height="2" fill="#7c7c7c"/><rect x="3" y="15" width="2" height="2" fill="#7c7c7c"/></svg>
<svg style="left:1275px;top:91px" width="15" height="19" viewBox="0 0 15 19" ><path d="M5 7L11 1L14.5 4.5L8.5 10.5Z" fill="#a9a9a9"/><path d="M3 11L5 13" stroke="#a9a9a9" stroke-width="2.4" stroke-linecap="round"/><rect x="0" y="15.5" width="2" height="2" fill="#a9a9a9"/><rect x="4" y="15.5" width="2" height="2" fill="#a9a9a9"/><rect x="8" y="15.5" width="2" height="2" fill="#a9a9a9"/></svg>
<svg style="left:1307px;top:93px" width="17" height="17" viewBox="0 0 17 17" ><circle cx="6" cy="6" r="5.3" fill="none" stroke="#a9a9a9" stroke-width="1.1"/><path d="M10 10L16 16.5" stroke="#a9a9a9" stroke-width="1.1"/><rect x="0" y="14.5" width="2" height="2" fill="#a9a9a9"/><rect x="4" y="14.5" width="2" height="2" fill="#a9a9a9"/><rect x="8" y="14.5" width="2" height="2" fill="#a9a9a9"/></svg>
<svg style="left:1340px;top:93px" width="17" height="17" viewBox="0 0 17 17" ><path d="M0.5 6.5L5 11L15.5 0.5" fill="none" stroke="#a9a9a9" stroke-width="1.1"/><rect x="1" y="14.5" width="2" height="2" fill="#a9a9a9"/><rect x="5" y="14.5" width="2" height="2" fill="#a9a9a9"/><rect x="9" y="14.5" width="2" height="2" fill="#a9a9a9"/></svg>
<div class="t" style="left:52.10px;top:191.57px;font-size:13.5px;color:#f4f4f4;font-weight:700;transform:scaleX(0.9924);transform-origin:0 0;">Создать новый документ</div>
<div class="r" style="left:51px;top:232px;width:252px;height:27px;background:#353535"></div>
<div class="r" style="left:52px;top:233px;width:250px;height:25px;background:#808080;border:1px solid #ffffff;box-shadow:inset 0 0 0 1px #747474"></div>
<div class="t" style="left:85.09px;top:241.12px;font-size:11.2px;color:#f4f4f4;font-weight:400;transform:scaleX(1.0057);transform-origin:0 0;">Пустой документ</div>
<div class="r" style="left:51px;top:272px;width:252px;height:27px;background:#353535"></div>
<div class="r" style="left:52px;top:273px;width:250px;height:25px;background:#808080;border:1px solid #ffffff;box-shadow:inset 0 0 0 1px #747474"></div>
<div class="t" style="left:85.13px;top:281.12px;font-size:11.2px;color:#f4f4f4;font-weight:400;transform:scaleX(0.9691);transform-origin:0 0;">Из файлов</div>
<div class="r" style="left:51px;top:312px;width:252px;height:27px;background:#353535"></div>
<div class="r" style="left:52px;top:313px;width:250px;height:25px;background:#808080;border:1px solid #ffffff;box-shadow:inset 0 0 0 1px #747474"></div>
<div class="t" style="left:86.10px;top:321.12px;font-size:11.2px;color:#f4f4f4;font-weight:400;transform:scaleX(1.0015);transform-origin:0 0;">Сканировать</div>
<svg style="left:62px;top:238px" width="14" height="16" viewBox="0 0 14 16" ><path d="M0.6 0.6H13.4V11L8.5 15.4H0.6Z" fill="none" stroke="#f0f0f0" stroke-width="1.1"/><path d="M8.5 11H13.4L8.5 15.4Z" fill="#f0f0f0"/></svg>
<svg style="left:62px;top:278px" width="15" height="16" viewBox="0 0 15 16" ><path d="M12.5 3V0.6H0.6V15.4H12.5V13" fill="none" stroke="#f0f0f0" stroke-width="1.1"/><path d="M4 8H14.5" stroke="#f0f0f0" stroke-width="1.1"/><path d="M6.5 5.5L4 8L6.5 10.5" fill="none" stroke="#f0f0f0" stroke-width="1.1"/></svg>
<svg style="left:61px;top:318px" width="16" height="16" viewBox="0 0 16 16" ><path d="M1 1H15" stroke="#f0f0f0" stroke-width="1.1"/><path d="M2.5 3.7H13" stroke="#e34a4a" stroke-width="1.4"/><rect x="0.6" y="6.6" width="14.8" height="8.8" fill="none" stroke="#f0f0f0" stroke-width="1.1"/><path d="M2.5 12.5H6" stroke="#f0f0f0" stroke-width="1"/></svg>
<svg style="left:61px;top:428px" width="16" height="16" viewBox="0 0 16 16" ><rect x="0.6" y="0.6" width="14.8" height="14.8" fill="none" stroke="#f0f0f0" stroke-width="1.2"/><rect x="0.6" y="0.6" width="14.8" height="2.2" fill="#f0f0f0"/><rect x="2.3" y="4.5" width="4" height="9" fill="#f0f0f0"/><rect x="8" y="5" width="5.5" height="1" fill="#f0f0f0"/><rect x="8" y="8" width="4" height="1" fill="#f0f0f0"/><rect x="8" y="11" width="2.5" height="1" fill="#f0f0f0"/></svg>
<svg style="left:61px;top:458px" width="16" height="16" viewBox="0 0 16 16" ><circle cx="8" cy="8" r="7.4" fill="none" stroke="#e8e8e8" stroke-width="1.1"/><rect x="7.1" y="6.5" width="1.8" height="6" fill="#f0f0f0"/><rect x="7.1" y="3.6" width="1.8" height="1.8" fill="#f0f0f0"/></svg>
<svg style="left:61px;top:490px" width="16" height="13" viewBox="0 0 16 13" ><rect x="0.6" y="0.6" width="14.8" height="11.8" fill="none" stroke="#f0f0f0" stroke-width="1.2"/><circle cx="4.6" cy="4.8" r="1.6" fill="#f0f0f0"/><path d="M2 10.5C2 8 3 7 4.6 7C6.2 7 7.2 8 7.2 10.5Z" fill="#f0f0f0"/><rect x="8.5" y="3" width="5" height="1" fill="#f0f0f0"/><rect x="8.5" y="5.3" width="4" height="1" fill="#f0f0f0"/><rect x="8.5" y="7.5" width="2.5" height="1" fill="#f0f0f0"/></svg>
<svg style="left:62px;top:519px" width="16" height="13" viewBox="0 0 16 13" ><rect x="0.6" y="0.6" width="14.8" height="11.8" fill="none" stroke="#d94545" stroke-width="1.2"/><rect x="0.6" y="2.5" width="14.8" height="2" fill="#d94545"/><path d="M2.5 9.5H5M6.5 9.5H9" stroke="#d94545" stroke-width="1"/></svg>
<div class="t" style="left:85.13px;top:431.43px;font-size:11.3px;color:#f0f0f0;font-weight:400;transform:scaleX(0.9695);transform-origin:0 0;">Параметры</div>
<div class="t" style="left:85.09px;top:461.43px;font-size:11.3px;color:#f0f0f0;font-weight:400;transform:scaleX(1.0101);transform-origin:0 0;">Руководство пользователя</div>
<div class="t" style="left:85.08px;top:491.43px;font-size:11.3px;color:#f0f0f0;font-weight:400;transform:scaleX(1.0216);transform-origin:0 0;">Регистрация...</div>
<div class="t" style="left:85.08px;top:521.43px;font-size:11.3px;color:#f0f0f0;font-weight:400;transform:scaleX(1.0187);transform-origin:0 0;">Купить онлайн</div>
<div class="r" style="left:368px;top:122px;width:1205px;height:941px;border-radius:8px;background:#383838;border:1px solid #117f11;box-shadow:0 0 24px rgba(0,0,0,0.35);overflow:hidden">
<div class="r" style="left:0;top:0;width:1203px;height:30px;background:#107c10"></div>
</div>
<svg style="left:377px;top:129px" width="16" height="16" viewBox="0 0 16 16" ><defs><linearGradient id="lg377" x1="0" y1="0" x2="1" y2="1"><stop offset="0" stop-color="#e4101f"/><stop offset="1" stop-color="#b52030"/></linearGradient></defs><path d="M2 0H16V13.8L14 16H0V2Z" fill="url(#lg377)"/><path d="M1 11.8L4.4 5.4L5.1 4.8L5.9 11.8Z M5.3 4H8.1L9.3 6.6L10 9.6L9.6 10.2L7.3 7.2Z M9.1 7.6L11 6.1L12.8 6.7L13.8 7.6L9.9 9.9L9.3 9.5Z M11 10.2L13.2 8.9L14.7 10.6L15 11.8L12.1 11.8Z" fill="#fff"/></svg>
<div class="r" style="left:1453px;top:137px;width:10px;height:1px;background:#6fb06f"></div>
<svg style="left:1498px;top:132px" width="10" height="10" viewBox="0 0 10 10" ><rect x="0.6" y="0.6" width="8.8" height="8.8" rx="1" fill="none" stroke="#fff" stroke-width="1.1"/></svg>
<svg style="left:1544px;top:132px" width="11" height="11" viewBox="0 0 11 11" ><path d="M0.5 0.5L10.5 10.5M10.5 0.5L0.5 10.5" stroke="#fff" stroke-width="1.1"/></svg>
<div class="t" style="left:397.79px;top:131.99px;font-size:12.3px;color:#ffffff;font-weight:400;transform:scaleX(0.9570);transform-origin:0 0;">Параметры</div>
<div class="r" style="left:380px;top:164px;width:256px;height:860px;background:#242424"></div>
<div class="r" style="left:382px;top:166px;width:252px;height:15px;background:#2f84dd"></div>
<div class="t" style="left:385.50px;top:167.72px;font-size:12.5px;color:#f2f2f2;font-weight:400;transform:scaleX(0.9627);transform-origin:0 0;">Основные</div>
<div class="t" style="left:385.50px;top:184.72px;font-size:12.5px;color:#f2f2f2;font-weight:400;transform:scaleX(0.9500);transform-origin:0 0;">Системные</div>
<div class="t" style="left:384.46px;top:201.72px;font-size:12.5px;color:#f2f2f2;font-weight:400;transform:scaleX(1.0359);transform-origin:0 0;">Формы</div>
<div class="t" style="left:384.56px;top:218.72px;font-size:12.5px;color:#f2f2f2;font-weight:400;transform:scaleX(0.9436);transform-origin:0 0;">Редактирование</div>
<div class="t" style="left:385.50px;top:235.72px;font-size:12.5px;color:#f2f2f2;font-weight:400;transform:scaleX(0.8912);transform-origin:0 0;">Сетка</div>
<div class="t" style="left:384.80px;top:252.72px;font-size:12.5px;color:#f2f2f2;font-weight:400;transform:scaleX(0.8847);transform-origin:0 0;">JavaScript</div>
<div class="t" style="left:384.50px;top:269.72px;font-size:12.5px;color:#f2f2f2;font-weight:400;transform:scaleX(0.9961);transform-origin:0 0;">Комментарии</div>
<div class="t" style="left:385.50px;top:286.72px;font-size:12.5px;color:#f2f2f2;font-weight:400;transform:scaleX(0.9595);transform-origin:0 0;">Отображение</div>
<div class="t" style="left:384.53px;top:303.72px;font-size:12.5px;color:#f2f2f2;font-weight:400;transform:scaleX(0.9690);transform-origin:0 0;">Панели инструментов</div>
<div class="t" style="left:384.54px;top:320.72px;font-size:12.5px;color:#f2f2f2;font-weight:400;transform:scaleX(0.9610);transform-origin:0 0;">Внешний вид</div>
<div class="t" style="left:384.57px;top:337.72px;font-size:12.5px;color:#f2f2f2;font-weight:400;transform:scaleX(0.9284);transform-origin:0 0;">Клавиатура</div>
<div class="t" style="left:384.55px;top:354.72px;font-size:12.5px;color:#f2f2f2;font-weight:400;transform:scaleX(0.9477);transform-origin:0 0;">Электронная почта</div>
<div class="t" style="left:384.57px;top:371.72px;font-size:12.5px;color:#f2f2f2;font-weight:400;transform:scaleX(0.9312);transform-origin:0 0;">Распознавание текста</div>
<div class="t" style="left:385.50px;top:388.72px;font-size:12.5px;color:#f2f2f2;font-weight:400;transform:scaleX(0.9597);transform-origin:0 0;">Затирание информации</div>
<div class="t" style="left:385.50px;top:405.72px;font-size:12.5px;color:#f2f2f2;font-weight:400;transform:scaleX(0.9037);transform-origin:0 0;">Сеть</div>
<div class="t" style="left:385.50px;top:422.72px;font-size:12.5px;color:#f2f2f2;font-weight:400;transform:scaleX(0.9367);transform-origin:0 0;">Сертификаты</div>
<div class="t" style="left:384.55px;top:439.72px;font-size:12.5px;color:#f2f2f2;font-weight:400;transform:scaleX(0.9464);transform-origin:0 0;">Язык</div>
<div class="t" style="left:385.50px;top:456.72px;font-size:12.5px;color:#f2f2f2;font-weight:400;transform:scaleX(0.9514);transform-origin:0 0;">Обновление</div>
<div class="r" style="left:661px;top:200px;width:880px;height:204px;border:1px solid #444444;border-radius:3px"></div>
<div class="t" style="left:659.60px;top:185.44px;font-size:11px;color:#e8e8e8;font-weight:400;transform:scaleX(0.9968);transform-origin:0 0;">Сохранение документов</div>
<div class="r" style="left:683px;top:212px;width:13px;height:13px;background:#262626"></div>
<svg style="left:683px;top:212px" width="13" height="13"><path d="M3.2 6.8 L5.6 10.2 L9.8 2.8" stroke="#d6d6d6" stroke-width="1.6" fill="none"/></svg>
<div class="t" style="left:701.30px;top:214.99px;font-size:11px;color:#e6e6e6;font-weight:400;transform:scaleX(1.0093);transform-origin:0 0;">Создавать резервную копию файла</div>
<div class="r" style="left:683px;top:235px;width:803px;height:22px;background:#262626;border-radius:4px"></div>
<div class="r" style="left:684px;top:236px;width:801px;height:20px;background:linear-gradient(#4c4c4c,#414141);border:1px solid #5c5c5c;border-radius:3px"></div>
<div class="t" style="left:687.20px;top:242.49px;font-size:11px;color:#e6e6e6;font-weight:400;transform:scaleX(0.9804);transform-origin:0 0;">C:/Users/Aleksandr/Documents</div>
<svg style="left:1471px;top:244px" width="8" height="5"><path d="M0 0 L8 0 L4 4.5 Z" fill="#d8d8d8"/></svg>
<div class="r" style="left:1492px;top:236px;width:26px;height:20px;background:#262626;border-radius:4px"></div>
<div class="r" style="left:1493px;top:237px;width:24px;height:18px;background:linear-gradient(#444,#3c3c3c);border:1px solid #595959;border-radius:3px"></div>
<div class="t" style="left:1499px;top:242.19px;font-size:11px;color:#f0f0f0;font-weight:400;">...</div>
<div class="t" style="left:681.38px;top:265.29px;font-size:11px;color:#e6e6e6;font-weight:400;transform:scaleX(1.0201);transform-origin:0 0;">Выбор каталога для документов для команды "Сохранить как"</div>
<div class="r" style="left:683px;top:282px;width:803px;height:22px;background:#262626;border-radius:4px"></div>
<div class="r" style="left:684px;top:283px;width:801px;height:20px;background:linear-gradient(#4c4c4c,#414141);border:1px solid #5c5c5c;border-radius:3px"></div>
<div class="t" style="left:686.21px;top:289.49px;font-size:11px;color:#e6e6e6;font-weight:400;transform:scaleX(0.9931);transform-origin:0 0;">Последняя использованная папка</div>
<svg style="left:1471px;top:291px" width="8" height="5"><path d="M0 0 L8 0 L4 4.5 Z" fill="#d8d8d8"/></svg>
<div class="r" style="left:1492px;top:283px;width:26px;height:20px;background:#2a2a2a;border-radius:4px"></div>
<div class="r" style="left:1493px;top:284px;width:24px;height:18px;background:linear-gradient(#6c6c6c,#5e5e5e);border:1px solid #7a7a7a;border-radius:3px"></div>
<div class="t" style="left:1499px;top:289.19px;font-size:11px;color:#8a8a8a;font-weight:400;">...</div>
<div class="t" style="left:682.40px;top:322.69px;font-size:11px;color:#e6e6e6;font-weight:400;transform:scaleX(0.9471);transform-origin:0 0;">Спецификация PDF</div>
<div class="r" style="left:960px;top:316px;width:549px;height:22px;background:#262626;border-radius:4px"></div>
<div class="r" style="left:961px;top:317px;width:547px;height:20px;background:linear-gradient(#4c4c4c,#414141);border:1px solid #5c5c5c;border-radius:3px"></div>
<div class="t" style="left:964.60px;top:323.49px;font-size:11px;color:#e6e6e6;font-weight:400;transform:scaleX(1.0250);transform-origin:0 0;">Автоматически</div>
<svg style="left:1494px;top:325px" width="8" height="5"><path d="M0 0 L8 0 L4 4.5 Z" fill="#d8d8d8"/></svg>
<div class="r" style="left:683px;top:346px;width:13px;height:13px;background:#262626"></div>
<div class="t" style="left:701.80px;top:348.89px;font-size:11px;color:#e6e6e6;font-weight:400;transform:scaleX(0.9905);transform-origin:0 0;">Автосохранение</div>
<div class="t" style="left:681.38px;top:375.79px;font-size:11px;color:#e6e6e6;font-weight:400;transform:scaleX(1.0184);transform-origin:0 0;">Интервал автосохранения:</div>
<div class="r" style="left:960px;top:370px;width:271px;height:21px;background:#232323;border-radius:3px"></div>
<div class="r" style="left:1218px;top:371px;width:13px;height:19px;background:linear-gradient(#4a4a4a,#404040);border:1px solid #5a5a5a;border-radius:0 3px 3px 0"></div>
<svg style="left:1220px;top:374px" width="9" height="13"><path d="M0.5 5 L4.5 1 L8.5 5 Z M0.5 8 L8.5 8 L4.5 12 Z" fill="#c8c8c8"/></svg>
<div class="t" style="left:964.60px;top:376.29px;font-size:11px;color:#f0f0f0;font-weight:400;transform:scaleX(0.9276);transform-origin:0 0;">5 мин</div>
<div class="t" style="left:658.69px;top:416.59px;font-size:11px;color:#e8e8e8;font-weight:400;transform:scaleX(1.0122);transform-origin:0 0;">История</div>
<div class="r" style="left:661px;top:432px;width:880px;height:102px;border:1px solid #444444;border-radius:3px"></div>
<div class="r" style="left:683px;top:444px;width:13px;height:13px;background:#262626"></div>
<div class="t" style="left:700.29px;top:447.39px;font-size:11px;color:#e6e6e6;font-weight:400;transform:scaleX(1.0079);transform-origin:0 0;">Восстановить последнюю сессию при старте</div>
<div class="r" style="left:683px;top:469px;width:13px;height:13px;background:#262626"></div>
<div class="t" style="left:700.30px;top:472.39px;font-size:11px;color:#e6e6e6;font-weight:400;transform:scaleX(0.9995);transform-origin:0 0;">Восстановить последние параметры просмотра при повторном открытии</div>
<div class="r" style="left:683px;top:494px;width:13px;height:13px;background:#262626"></div>
<svg style="left:683px;top:494px" width="13" height="13"><path d="M3.2 6.8 L5.6 10.2 L9.8 2.8" stroke="#d6d6d6" stroke-width="1.6" fill="none"/></svg>
<div class="t" style="left:701.30px;top:497.39px;font-size:11px;color:#e6e6e6;font-weight:400;transform:scaleX(0.9937);transform-origin:0 0;">Сохранять список последних файлов</div>
<div class="r" style="left:660px;top:546px;width:13px;height:13px;background:#262626"></div>
<svg style="left:660px;top:546px" width="13" height="13"><path d="M3.2 6.8 L5.6 10.2 L9.8 2.8" stroke="#d6d6d6" stroke-width="1.6" fill="none"/></svg>
<div class="t" style="left:678.30px;top:548.99px;font-size:11px;color:#e6e6e6;font-weight:400;transform:scaleX(1.0310);transform-origin:0 0;">Открывать документы как новые вкладки в одном окне</div>
<div class="r" style="left:660px;top:575px;width:13px;height:13px;background:#262626"></div>
<div class="t" style="left:677.26px;top:577.99px;font-size:11px;color:#e6e6e6;font-weight:400;transform:scaleX(1.0357);transform-origin:0 0;">Разрешить открытие одного и того же документа в нескольких вкладках</div>
<div class="r" style="left:660px;top:604px;width:13px;height:13px;background:#262626"></div>
<div class="t" style="left:678.30px;top:606.99px;font-size:11px;color:#e6e6e6;font-weight:400;transform:scaleX(0.9876);transform-origin:0 0;">Заблокировать файл от открытия другими экземплярами Master PDF Editor</div>
<div class="r" style="left:660px;top:633px;width:13px;height:13px;background:#262626"></div>
<svg style="left:660px;top:633px" width="13" height="13"><path d="M3.2 6.8 L5.6 10.2 L9.8 2.8" stroke="#d6d6d6" stroke-width="1.6" fill="none"/></svg>
<div class="t" style="left:677.31px;top:635.99px;font-size:11px;color:#e6e6e6;font-weight:400;transform:scaleX(0.9860);transform-origin:0 0;">Включить масштабирование колесиком мыши</div>
<div class="r" style="left:660px;top:662px;width:13px;height:13px;background:#262626"></div>
<svg style="left:660px;top:662px" width="13" height="13"><path d="M3.2 6.8 L5.6 10.2 L9.8 2.8" stroke="#d6d6d6" stroke-width="1.6" fill="none"/></svg>
<div class="t" style="left:678.30px;top:664.99px;font-size:11px;color:#e6e6e6;font-weight:400;transform:scaleX(1.0074);transform-origin:0 0;">Отображать быстрые действия при выделении текста и комментариев</div>
<div class="r" style="left:660px;top:691px;width:13px;height:13px;background:#262626"></div>
<svg style="left:660px;top:691px" width="13" height="13"><path d="M3.2 6.8 L5.6 10.2 L9.8 2.8" stroke="#d6d6d6" stroke-width="1.6" fill="none"/></svg>
<div class="t" style="left:677.26px;top:693.99px;font-size:11px;color:#e6e6e6;font-weight:400;transform:scaleX(1.0358);transform-origin:0 0;">Показывать стартовую страницу</div>
<div class="r" style="left:1309px;top:1030px;width:80px;height:21px;background:#4b5059;border:1px solid #4ea1f3;border-radius:3px;box-shadow:inset 0 0 0 1px #5b6068"></div>
<div class="t" style="left:1309px;top:1030px;width:80px;height:21px;line-height:23px;text-align:center;font-size:11px;color:#f0f0f0">OK</div>
<div class="r" style="left:1395px;top:1030px;width:80px;height:21px;background:#2a2a2a;border-radius:4px"></div>
<div class="r" style="left:1396px;top:1031px;width:78px;height:19px;background:linear-gradient(#474747,#3d3d3d);border:1px solid #5a5a5a;border-radius:3px"></div>
<div class="t" style="left:1396px;top:1031px;width:78px;height:19px;line-height:21px;text-align:center;font-size:11px;color:#f0f0f0">Отмена</div>
<div class="r" style="left:1481px;top:1030px;width:80px;height:21px;background:#2a2a2a;border-radius:4px"></div>
<div class="r" style="left:1482px;top:1031px;width:78px;height:19px;background:linear-gradient(#474747,#3d3d3d);border:1px solid #5a5a5a;border-radius:3px"></div>
<div class="t" style="left:1482px;top:1031px;width:78px;height:19px;line-height:21px;text-align:center;font-size:11px;color:#f0f0f0">Справка</div>
</body></html>
